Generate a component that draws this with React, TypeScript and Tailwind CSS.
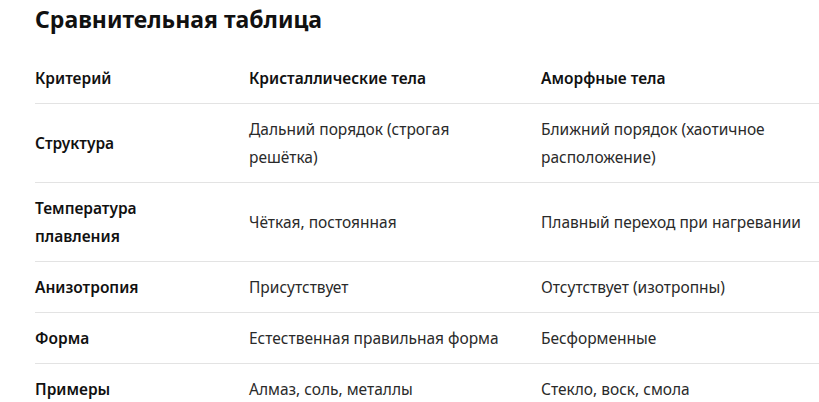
import React from "react";

type Row = { k: React.ReactNode; a: React.ReactNode; b: React.ReactNode };

const rows: Row[] = [
  {
    k: "Структура",
    a: (
      <>
        Дальний порядок (строгая
        <br />
        решётка)
      </>
    ),
    b: (
      <>
        Ближний порядок (хаотичное
        <br />
        расположение)
      </>
    ),
  },
  {
    k: (
      <>
        Температура
        <br />
        плавления
      </>
    ),
    a: "Чёткая, постоянная",
    b: "Плавный переход при нагревании",
  },
  { k: "Анизотропия", a: "Присутствует", b: "Отсутствует (изотропны)" },
  { k: "Форма", a: "Естественная правильная форма", b: "Бесформенные" },
  { k: "Примеры", a: "Алмаз, соль, металлы", b: "Стекло, воск, смола" },
];

export default function App() {
  return (
    <div
      className="w-[819px] h-[402px] overflow-hidden bg-white text-[#1f1f1f]"
      style={{ fontFamily: '"Noto Sans", "Open Sans", sans-serif' }}
    >
      <div className="pl-[35px] pt-[4px]">
        <h2 className="text-[23px] leading-[31px] font-bold text-[#111]">
          Сравнительная таблица
        </h2>
        <div className="mt-[18px]">
          <div className="grid grid-cols-[214px_292px_1fr] border-b border-[#e3e3e3] py-[11px] text-[15.5px] leading-[28px] font-semibold text-[#111] whitespace-nowrap">
            <div>Критерий</div>
            <div>Кристаллические тела</div>
            <div>Аморфные тела</div>
          </div>
          {rows.map((r, i) => (
            <div
              key={i}
              className="grid grid-cols-[214px_292px_1fr] items-center border-b border-[#e3e3e3] py-[11px] text-[15.5px] leading-[28px] whitespace-nowrap"
            >
              <div className="font-semibold text-[#111]">{r.k}</div>
              <div className="text-[#2a2a2a]">{r.a}</div>
              <div className="text-[#2a2a2a]">{r.b}</div>
            </div>
          ))}
        </div>
      </div>
    </div>
  );
}
